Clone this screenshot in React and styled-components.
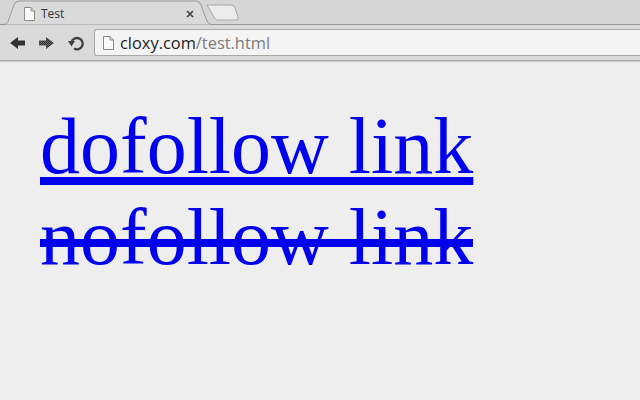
import React from "react";
import styled, { createGlobalStyle } from "styled-components";

const Global = createGlobalStyle`
  html, body { margin: 0; padding: 0; width: 640px; height: 400px; overflow: hidden; background: #eeeeee; }
`;

const Page = styled.div`
  width: 640px; height: 400px; display: flex; flex-direction: column; background: #eeeeee;
`;
const TabStrip = styled.div`
  height: 25px; position: relative; background: #d6d6d6; flex: none;
`;
const StripLine = styled.div`
  position: absolute; left: 0; right: 0; bottom: 0; height: 1px; background: #9a9a9a;
`;
const TabShape = styled.svg`
  position: absolute; left: 0; top: 0;
`;
const TabContent = styled.div`
  position: absolute; left: 23px; top: 0; width: 171px; height: 27px;
  display: flex; align-items: center; gap: 5px;
  font: 12px "Open Sans", sans-serif; color: #333;
`;
const TabTitle = styled.span`
  flex: 1; font-size: 12px;
`;
const Toolbar = styled.div`
  height: 35px; flex: none; background: #dadada; display: flex; align-items: center;
  padding-left: 3px;
`;
const IconButton = styled.div`
  width: 29px; height: 18px; flex: none; display: flex; align-items: center; justify-content: center;
`;
const Omnibox = styled.div`
  flex: 1; height: 27px; margin-left: 4px; background: #f4f4f4; border: 1px solid #a9a9a9;
  border-right: none; border-radius: 3px 0 0 3px; display: flex; align-items: center; gap: 5px;
  padding-left: 7px; box-sizing: border-box; font: 16.4px "Open Sans", sans-serif;
`;
const Host = styled.span`color: #222;`;
const Path = styled.span`color: #7d7d7d;`;
const Divider = styled.div`
  height: 2px; flex: none; background: #d0d0d0; border-top: 1px solid #a6a6a6; box-sizing: border-box;
`;
const Content = styled.main`
  padding: 39px 0 0 40px; flex: 1;
  font: 80px/91px "Liberation Serif", serif;
`;
const Link = styled.a`
  display: block; position: relative; width: max-content; color: #0000ee;
  text-decoration: ${p => (p.$struck ? "none" : "underline")};
  text-decoration-thickness: 8px;
  text-underline-offset: 4px;
  text-decoration-skip-ink: none;
  ${p => p.$struck && `
    &::after {
      content: "";
      position: absolute;
      left: 0; right: 0; top: 47px; height: 8px;
      background: #0000ee;
    }
  `}
`;

const Doc = ({ size = 13 }) => (
  <svg width={size} height={size * 16 / 13} viewBox="0 0 13 16" style={{ flex: "none" }}>
    <path d="M1.500 1.500h6.500l3.500 3.500v9.500h-10z" fill="#fafafa" stroke="#8a8a8a" />
    <path d="M8 1.500v3.500h3.500" fill="none" stroke="#8a8a8a" />
  </svg>
);
const Arrow = ({ flip, dotted }) => (
  <svg width="15" height="12" viewBox="0 0 15 12">
    <defs>
      <pattern id="dither" width="2" height="2" patternUnits="userSpaceOnUse">
        <rect width="2" height="2" fill="#6a6a6a" />
        <rect width="1" height="1" fill="#2e2e2e" />
        <rect x="1" y="1" width="1" height="1" fill="#2e2e2e" />
      </pattern>
    </defs>
    <path
      d={flip ? "M0 3.500h7V0l8 6-8 6V8.500H0z" : "M15 3.500H8V0L0 6l8 6V8.500h7z"}
      fill={dotted ? "url(#dither)" : "#333"}
    />
  </svg>
);
const Reload = () => (
  <svg width="16" height="16" viewBox="0 0 16 16">
    <path d="M3.500 7A5.700 5.700 0 1 1 6 13.600" fill="none" stroke="#3f3f3f" strokeWidth="2.300" />
    <path d="M0 6h7L3.500 11.500z" fill="#3f3f3f" />
  </svg>
);

export default function App() {
  return (
    <Page>
      <Global />
      <TabStrip>
        <StripLine />
        <TabShape width="250" height="25" viewBox="0 0 250 25">
          <path d="M0 24.500h4q3 0 4-3L14 5q1.500-4 5-4H196q4 0 5 4l6 16q1 3 4 3.500" fill="#dadada" stroke="#9a9a9a" />
          <path d="M207 5h24q3 0 4 3l3 9q1 3-2 3H217q-2 0-3-3z" fill="#ececec" stroke="#a8a8a8" />
        </TabShape>
        <TabContent>
          <Doc size={13} />
          <TabTitle>Test</TabTitle>
          <svg width="8" height="8" viewBox="0 0 8 8">
            <path d="M1 1l6 6M7 1l-6 6" stroke="#444" strokeWidth="1.700" />
          </svg>
        </TabContent>
      </TabStrip>
      <Toolbar>
        <IconButton><Arrow /></IconButton>
        <IconButton><Arrow flip dotted /></IconButton>
        <IconButton><Reload /></IconButton>
        <Omnibox>
          <Doc size={13} />
          <span><Host>cloxy.com</Host><Path>/test.html</Path></span>
        </Omnibox>
      </Toolbar>
      <Divider />
      <Content>
        <Link href="#">dofollow link</Link>
        <Link href="#" $struck>nofollow link</Link>
      </Content>
    </Page>
  );
}
